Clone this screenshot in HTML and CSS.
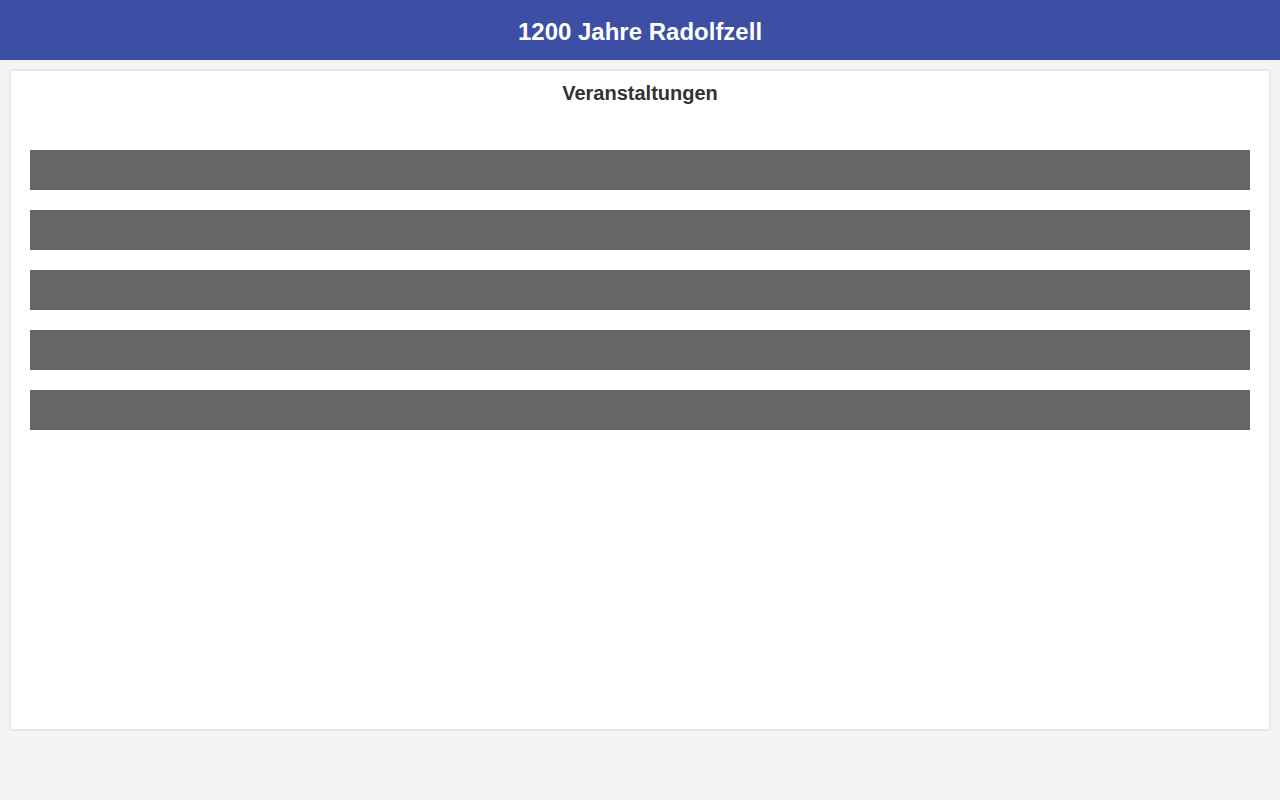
FILE: index.html
```html
<!DOCTYPE html>
<html lang="de">
<head>
<meta charset="utf-8">
<title>1200 Jahre Radolfzell</title>
<link rel="stylesheet" href="styles.css">
</head>
<body>
<header class="topbar">
  <h1 class="topbar-title">1200 Jahre Radolfzell</h1>
</header>
<main class="panel">
  <h2 class="panel-title">Veranstaltungen</h2>
  <ul class="event-list">
    <li class="event-bar"></li>
    <li class="event-bar"></li>
    <li class="event-bar"></li>
    <li class="event-bar"></li>
    <li class="event-bar"></li>
  </ul>
</main>
</body>
</html>
```
FILE: styles.css
```css
html, body {
  margin: 0;
  padding: 0;
}
body {
  background: #f4f4f4;
  font-family: "Liberation Sans", Arial, sans-serif;
  color: #333333;
}
.topbar {
  height: 60px;
  box-sizing: border-box;
  padding-top: 4px;
  background: #3c4fa4;
  display: flex;
  align-items: center;
  justify-content: center;
}
.topbar-title {
  margin: 0;
  color: #ffffff;
  font-size: 24px;
  line-height: 28px;
  font-weight: bold;
}
.panel {
  display: block;
  margin: 9px;
  background: #ffffff;
  border: 2px solid #e8e8e8;
  padding: 10px 19px 0;
  box-sizing: content-box;
  height: 648px;
}
.panel-title {
  margin: 0;
  text-align: center;
  font-size: 20px;
  line-height: 24px;
  font-weight: bold;
  color: #333333;
}
.event-list {
  list-style: none;
  margin: 45px 0 0;
  padding: 0;
  display: flex;
  flex-direction: column;
  gap: 20px;
}
.event-bar {
  height: 40px;
  background: #666666;
}
```
